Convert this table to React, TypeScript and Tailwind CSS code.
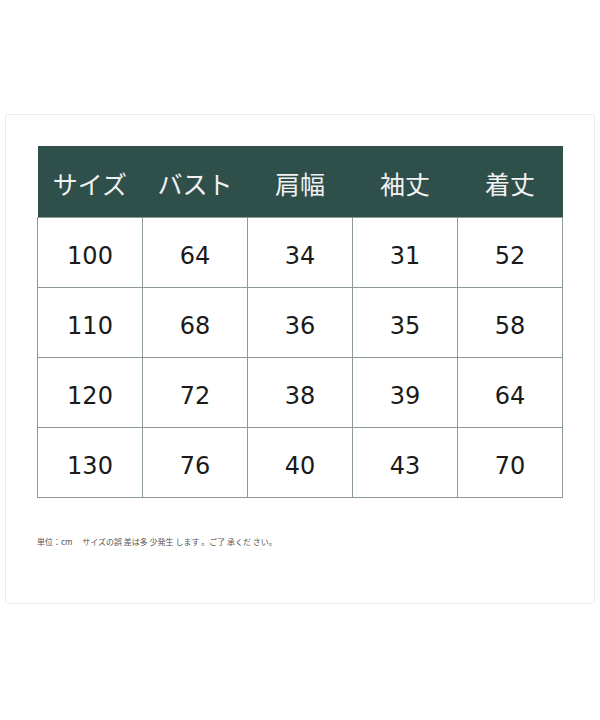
import React from "react";

const headers = ["サイズ", "バスト", "肩幅", "袖丈", "着丈"];
const rows = [
  ["100", "64", "34", "31", "52"],
  ["110", "68", "36", "35", "58"],
  ["120", "72", "38", "39", "64"],
  ["130", "76", "40", "43", "70"],
];

export default function App() {
  return (
    <div className="w-[600px] h-[720px] bg-white pt-[114px] px-[5px]">
      <div className="h-[490px] rounded-[3px] border border-[#ececec] px-[31px] pt-[31px]">
        <table className="w-[526px] border-collapse table-fixed">
          <thead>
            <tr className="bg-[#2f4f4b] h-[71px]">
              {headers.map((h) => (
                <th
                  key={h}
                  className="font-normal text-[25px] text-[#f2f2f2] pt-[4px]"
                  style={{ fontFamily: '"Noto Sans CJK JP", "Noto Sans", sans-serif' }}
                >
                  {h}
                </th>
              ))}
            </tr>
          </thead>
          <tbody>
            {rows.map((r) => (
              <tr key={r[0]} className="h-[70px]">
                {r.map((v, i) => (
                  <td
                    key={i}
                    className="border border-[#8d9a98] text-center text-[24px] text-[#1a1a1a] pt-[7px]"
                    style={{ fontFamily: '"DejaVu Sans", Verdana, sans-serif' }}
                  >
                    {v}
                  </td>
                ))}
              </tr>
            ))}
          </tbody>
        </table>
        <p
          className="mt-[38px] text-[8px] text-[#555] whitespace-pre"
          style={{ fontFamily: '"Noto Sans CJK JP", sans-serif' }}
        >
          {"単位：cm　 サイズの誤 差は多 少発生 します 。ご了 承くだ さい。"}
        </p>
      </div>
    </div>
  );
}
